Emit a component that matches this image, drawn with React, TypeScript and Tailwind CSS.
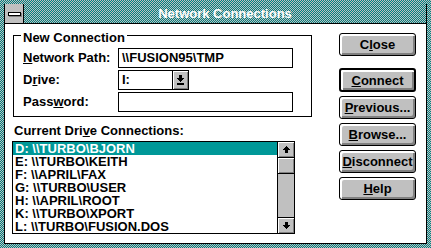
import type { ReactNode } from "react";

const dither =
  "bg-[image:repeating-conic-gradient(#008080_0_25%,#c0c0c0_0_50%)] bg-[length:2px_2px]";

const bevel = "bg-[#c0c0c0] shadow-[inset_1px_1px_0_#fff,inset_-1px_-1px_0_#808080]";

const drives = [
  "D: \\\\TURBO\\BJORN",
  "E: \\\\TURBO\\KEITH",
  "F: \\\\APRIL\\FAX",
  "G: \\\\TURBO\\USER",
  "H: \\\\APRIL\\ROOT",
  "K: \\\\TURBO\\XPORT",
  "L: \\\\TURBO\\FUSION.DOS",
];

function Arrow({ down, bar }: { down?: boolean; bar?: boolean }) {
  return (
    <svg width="7" height={bar ? 10 : 7} viewBox={`0 0 7 ${bar ? 10 : 7}`} shapeRendering="crispEdges">
      {down ? (
        <polygon points="2,0 5,0 5,3 7,3 3.5,7 0,3 2,3" fill="#000" />
      ) : (
        <polygon points="3.5,0 7,4 5,4 5,7 2,7 2,4 0,4" fill="#000" />
      )}
      {bar && <rect x="0" y="8" width="7" height="2" fill="#000" />}
    </svg>
  );
}

function Btn({ children, def }: { children: ReactNode; def?: boolean }) {
  return (
    <div
      className={`flex w-[77px] items-center justify-center rounded-[3px] border-black bg-[#c0c0c0] text-[13px] font-bold leading-none text-black shadow-[inset_2px_2px_0_#fff,inset_-2px_-2px_0_#808080] ${
        def ? "h-[24px] border-2" : "h-[23px] border"
      }`}
    >
      {children}
    </div>
  );
}

function Field({ children, w = "w-[175px]" }: { children?: ReactNode; w?: string }) {
  return (
    <div className={`flex h-[20px] ${w} items-center border border-black bg-white pl-[3px] text-[13px] font-bold`}>
      {children}
    </div>
  );
}

export default function App() {
  return (
    <div className={`flex h-[248px] w-[431px] flex-col p-[4px] font-['Liberation_Sans',Arial,sans-serif] text-black ${dither}`}>
      <div className="flex flex-1 flex-col border-x border-b border-black">
        {/* title bar */}
        <div className="flex h-[20px] border-b border-black">
          <div className="flex w-[19px] items-center justify-center border-r border-black bg-[#c0c0c0]">
            <div className="h-[4px] w-[13px] border border-black bg-white shadow-[1px_1px_0_#808080]" />
          </div>
          <div className={`flex flex-1 items-center justify-center text-[13px] font-bold text-white ${dither}`}>
            Network Connections
          </div>
        </div>

        {/* client */}
        <div className="flex flex-1 bg-white">
          <div className="flex flex-col pl-[7px] pt-[1px]">
            <fieldset className="ml-[1px] w-[299px] border border-black pb-[4px]">
              <legend className="ml-[7px] bg-white px-[2px] pt-[6px] text-[13px] font-bold leading-[14px]">
                New Connection
              </legend>
              <div className="mt-[3px] flex flex-col gap-[2px] pl-[9px] text-[13px] font-bold">
                <div className="flex items-center">
                  <span className="w-[95px]">
                    <u>N</u>etwork Path:
                  </span>
                  <Field>\\FUSION95\TMP</Field>
                </div>
                <div className="flex items-center">
                  <span className="w-[95px]">
                    D<u>r</u>ive:
                  </span>
                  <Field w="w-[55px]">I:</Field>
                  <div className={`-ml-px flex h-[20px] w-[17px] items-center justify-center border border-black ${bevel}`}>
                    <Arrow down bar />
                  </div>
                </div>
                <div className="flex items-center">
                  <span className="w-[95px]">
                    Pass<u>w</u>ord:
                  </span>
                  <Field />
                </div>
              </div>
            </fieldset>

            <div className="mt-[7px] pl-[2px] text-[13px] font-bold leading-[14px]">
              Current Dri<u>v</u>e Connections:
            </div>

            <div className="mt-[3px] flex h-[93px] w-[283px] border border-black">
              <div className="flex flex-1 flex-col text-[13px] font-bold leading-[13px]">
                {drives.map((d, i) => (
                  <div
                    key={d}
                    className={`h-[13px] pl-[2px] ${i === 0 ? "bg-[#009898] text-white" : ""}`}
                  >
                    {d}
                  </div>
                ))}
              </div>
              <div className="flex w-[17px] flex-col border-l border-black bg-[#c0c0c0]">
                <div className={`flex h-[16px] items-center justify-center border-b border-black ${bevel}`}>
                  <Arrow />
                </div>
                <div className={`h-[16px] border-b border-black ${bevel}`} />
                <div className="flex-1" />
                <div className={`flex h-[16px] items-center justify-center border-t border-black ${bevel}`}>
                  <Arrow down />
                </div>
              </div>
            </div>
          </div>

          <div className="ml-auto mr-[10px] flex flex-col pt-[9px]">
            <Btn>
              C<u>l</u>ose
            </Btn>
            <div className="mt-[12px]">
              <Btn def>
                <u>C</u>onnect
              </Btn>
            </div>
            <div className="mt-[4px] flex flex-col gap-[4px]">
              <Btn>
                <u>P</u>revious...
              </Btn>
              <Btn>
                <u>B</u>rowse...
              </Btn>
              <Btn>
                <u>D</u>isconnect
              </Btn>
              <Btn>
                <u>H</u>elp
              </Btn>
            </div>
          </div>
        </div>
      </div>
    </div>
  );
}
